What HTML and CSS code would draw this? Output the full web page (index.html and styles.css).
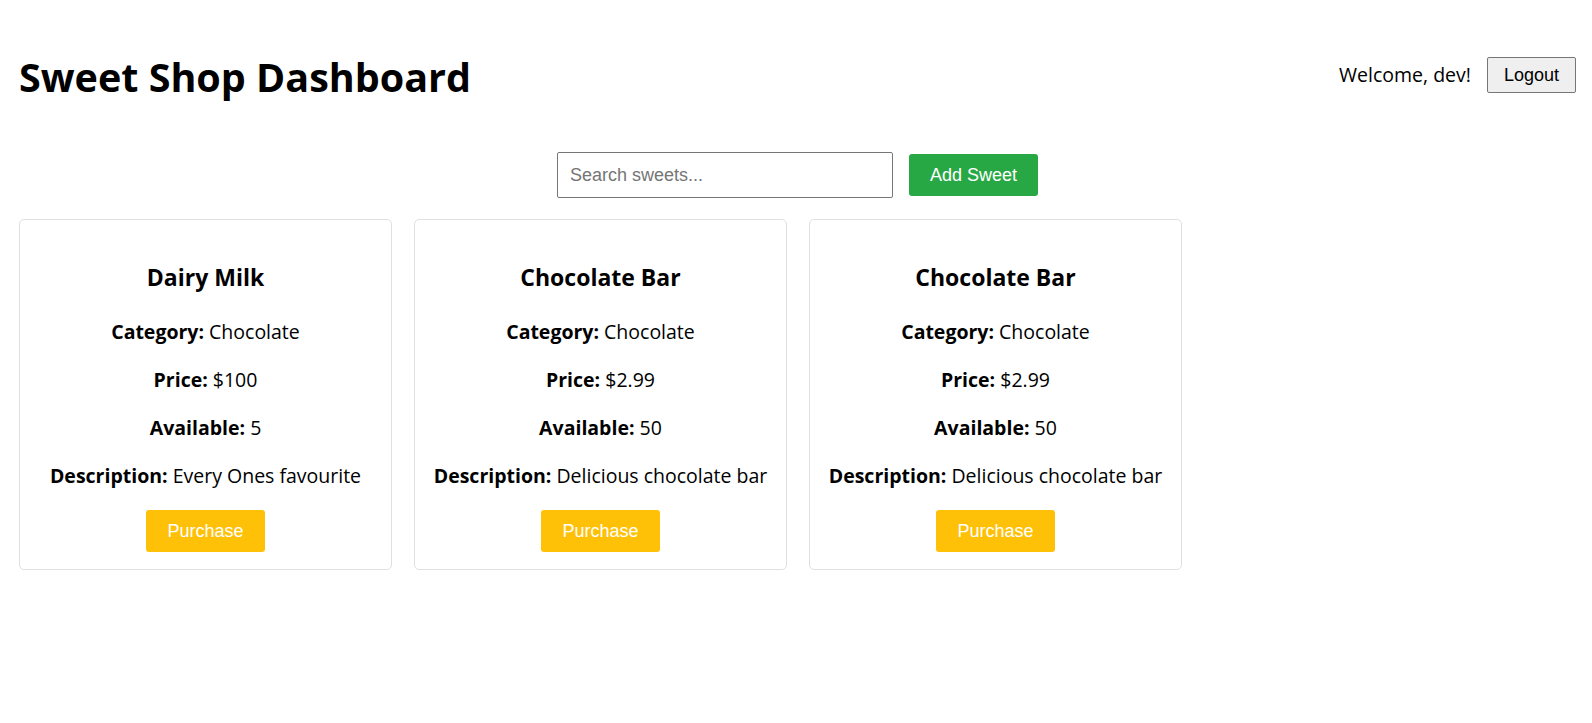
FILE: index.html
```html
<!DOCTYPE html>
<html lang="en">
<head>
<meta charset="utf-8">
<title>Sweet Shop Dashboard</title>
<link rel="stylesheet" href="styles.css">
</head>
<body>
<div class="page">
  <header class="header">
    <h1 class="title">Sweet Shop Dashboard</h1>
    <div class="user">
      <span class="welcome">Welcome, dev!</span>
      <button class="btn-logout">Logout</button>
    </div>
  </header>

  <div class="toolbar">
    <input class="search" type="text" placeholder="Search sweets...">
    <button class="btn btn-add">Add Sweet</button>
  </div>

  <div class="cards">
    <div class="card">
      <h3 class="card-title">Dairy Milk</h3>
      <p class="line first"><strong>Category:</strong> Chocolate</p>
      <p class="line"><strong>Price:</strong> $100</p>
      <p class="line"><strong>Available:</strong> 5</p>
      <p class="line"><strong>Description:</strong> Every Ones favourite</p>
      <button class="btn btn-purchase">Purchase</button>
    </div>
    <div class="card">
      <h3 class="card-title">Chocolate Bar</h3>
      <p class="line first"><strong>Category:</strong> Chocolate</p>
      <p class="line"><strong>Price:</strong> $2.99</p>
      <p class="line"><strong>Available:</strong> 50</p>
      <p class="line"><strong>Description:</strong> Delicious chocolate bar</p>
      <button class="btn btn-purchase">Purchase</button>
    </div>
    <div class="card">
      <h3 class="card-title">Chocolate Bar</h3>
      <p class="line first"><strong>Category:</strong> Chocolate</p>
      <p class="line"><strong>Price:</strong> $2.99</p>
      <p class="line"><strong>Available:</strong> 50</p>
      <p class="line"><strong>Description:</strong> Delicious chocolate bar</p>
      <button class="btn btn-purchase">Purchase</button>
    </div>
  </div>
</div>
</body>
</html>
```

FILE: styles.css
```css
* {
  box-sizing: border-box;
}

html, body {
  margin: 0;
  padding: 0;
  background: #ffffff;
}

body {
  font-family: "Open Sans", "Noto Sans", "DejaVu Sans", sans-serif;
  color: #000000;
}

.page {
  padding: 0 16px 0 19px;
}

.header {
  display: flex;
  justify-content: space-between;
  align-items: center;
  height: 70px;
  margin-top: 40px;
}

.title {
  margin: 0;
  padding-top: 4px;
  font-size: 39.5px;
  line-height: 46px;
  font-weight: 700;
}

.user {
  display: flex;
  align-items: center;
  gap: 16px;
}

.welcome {
  font-size: 19.5px;
  line-height: 26px;
}

.btn-logout {
  font-family: "Liberation Sans", Arial, sans-serif;
  font-size: 18px;
  line-height: 22px;
  padding: 6px 16px;
  background: #efefef;
  border: 1px solid #767676;
  border-radius: 2px;
  color: #000;
}

.toolbar {
  display: flex;
  justify-content: center;
  align-items: center;
  gap: 16px;
  margin-top: 42px;
}

.search {
  width: 336px;
  height: 46px;
  padding: 0 12px;
  font-family: "Liberation Sans", Arial, sans-serif;
  font-size: 18px;
  border: 1px solid #767676;
  border-radius: 2px;
  color: #000;
  background: #fff;
}

.search::placeholder {
  color: #757575;
}

.btn {
  font-family: "Liberation Sans", Arial, sans-serif;
  font-size: 18px;
  line-height: 22px;
  padding: 10px 21px;
  border: none;
  border-radius: 3px;
  color: #ffffff;
  cursor: pointer;
}

.btn-add {
  background: #28a745;
}

.btn-purchase {
  background: #ffc107;
  margin-top: 20px;
}

.cards {
  display: flex;
  gap: 22px;
  margin-top: 21px;
}

.card {
  width: 373px;
  display: flex;
  flex-direction: column;
  align-items: center;
  padding: 41px 10px 17px;
  border: 1px solid #e0e0e0;
  border-radius: 5px;
  text-align: center;
}

.card-title {
  margin: 0;
  font-size: 23px;
  line-height: 32px;
  font-weight: 700;
}

.line {
  margin: 20px 0 0;
  font-size: 19.5px;
  line-height: 28px;
  white-space: nowrap;
}

.line.first {
  margin-top: 25px;
}

.line strong {
  font-weight: 700;
}
```
